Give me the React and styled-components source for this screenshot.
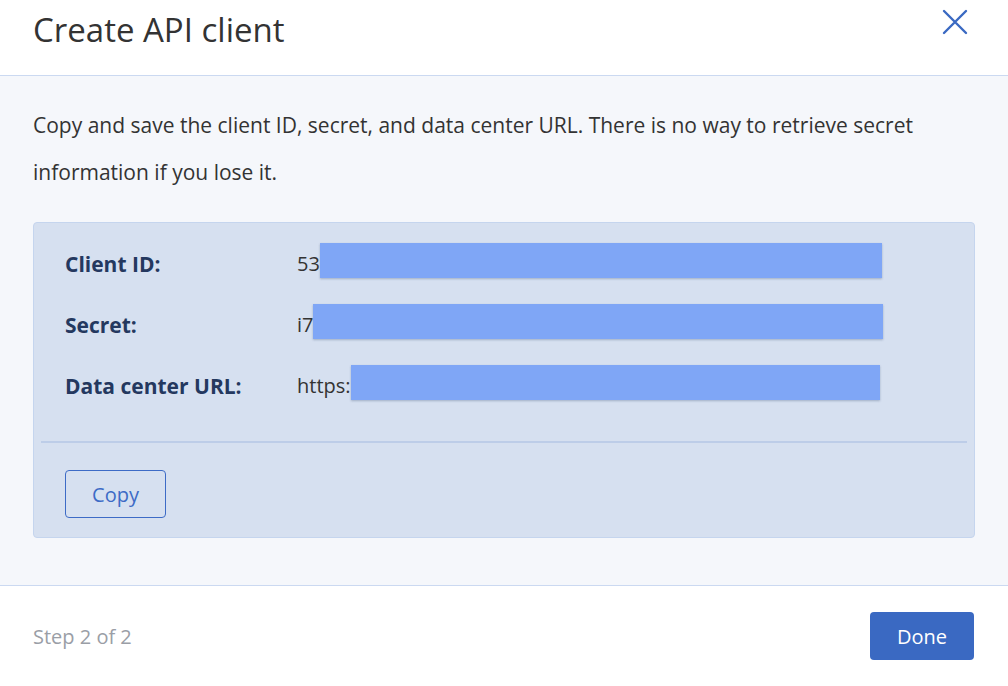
import React from 'react'
import styled, { createGlobalStyle } from 'styled-components'

const Global = createGlobalStyle`
  * { box-sizing: border-box; }
  html, body { margin: 0; padding: 0; }
  body {
    font-family: "Open Sans", "Noto Sans", sans-serif;
    background: #ffffff;
    color: #333;
  }
`

const Dialog = styled.div`
  width: 1008px;
  height: 686px;
  display: flex;
  flex-direction: column;
  background: #fff;
`

const Header = styled.div`
  height: 76px;
  flex: none;
  display: flex;
  align-items: flex-start;
  justify-content: space-between;
  padding: 8px 33px 0 33px;
  border-bottom: 1px solid #cbd9f1;
`

const Title = styled.h1`
  margin: 0;
  font-size: 33px;
  font-weight: 400;
  color: #333;
  line-height: 44px;
`

const Close = styled.button`
  border: none;
  background: none;
  padding: 0;
  margin-top: 1px;
  margin-right: -2px;
  cursor: pointer;
  width: 44px;
  height: 44px;
  display: flex;
  align-items: flex-start;
  justify-content: center;
`

const Body = styled.div`
  flex: none;
  height: 510px;
  background: #f5f7fb;
  padding: 26px 33px 0 33px;
  border-bottom: 1px solid #cbd9f1;
`

const Intro = styled.p`
  margin: 0 0 26px 0;
  font-size: 21px;
  line-height: 47px;
  color: #333;
`

const Panel = styled.div`
  background: #d6e0f0;
  border: 1px solid #c5d5ee;
  border-radius: 4px;
  padding: 20px 7px 19px 7px;
`

const Rows = styled.div`
  display: flex;
  flex-direction: column;
  gap: 26px;
  padding: 0 24px 41px 24px;
  border-bottom: 2px solid #bdcde8;
`

const Row = styled.div`
  display: flex;
  align-items: flex-end;
  height: 35px;
`

const Label = styled.div`
  width: 232px;
  font-size: 21px;
  line-height: 27px;
  font-weight: 700;
  color: #24385f;
`

const Value = styled.div`
  display: flex;
  align-items: flex-end;
  font-size: 20px;
  line-height: 28px;
  color: #333;
`

const Mask = styled.div`
  height: 35px;
  width: ${p => p.w}px;
  background: #7fa6f6;
  box-shadow: 0 1px 2px rgba(60, 80, 120, 0.35);
`

const Footer = styled.div`
  padding: 27px 24px 0 24px;
`

const OutlineButton = styled.button`
  width: 101px;
  height: 48px;
  border: 1px solid #3d6bc6;
  border-radius: 4px;
  background: transparent;
  color: #3d6bc6;
  font-family: inherit;
  font-size: 20px;
  cursor: pointer;
`

const Bottom = styled.div`
  flex: 1;
  display: flex;
  align-items: center;
  justify-content: space-between;
  padding: 0 34px 0 33px;
`

const Step = styled.span`
  font-size: 20px;
  color: #9a9ea6;
`

const PrimaryButton = styled.button`
  width: 104px;
  height: 48px;
  border: none;
  border-radius: 4px;
  background: #3a69c2;
  color: #fff;
  font-family: inherit;
  font-size: 20px;
  cursor: pointer;
`

const rows = [
  { label: 'Client ID:', prefix: '53', w: 562 },
  { label: 'Secret:', prefix: 'i7', w: 570 },
  { label: 'Data center URL:', prefix: 'https:', w: 529 },
]

export default function App() {
  return (
    <>
      <Global />
      <Dialog>
        <Header>
          <Title>Create API client</Title>
          <Close aria-label="Close">
            <svg width="26" height="26" viewBox="0 0 26 26" fill="none">
              <path d="M2 2 L24 24 M24 2 L2 24" stroke="#3a69c2" strokeWidth="2.4" strokeLinecap="round" />
            </svg>
          </Close>
        </Header>
        <Body>
          <Intro>
            Copy and save the client ID, secret, and data center URL. There is no way to retrieve secret information if you lose it.
          </Intro>
          <Panel>
            <Rows>
              {rows.map(r => (
                <Row key={r.label}>
                  <Label>{r.label}</Label>
                  <Value>
                    {r.prefix}
                    <Mask w={r.w} />
                  </Value>
                </Row>
              ))}
            </Rows>
            <Footer>
              <OutlineButton>Copy</OutlineButton>
            </Footer>
          </Panel>
        </Body>
        <Bottom>
          <Step>Step 2 of 2</Step>
          <PrimaryButton>Done</PrimaryButton>
        </Bottom>
      </Dialog>
    </>
  )
}
